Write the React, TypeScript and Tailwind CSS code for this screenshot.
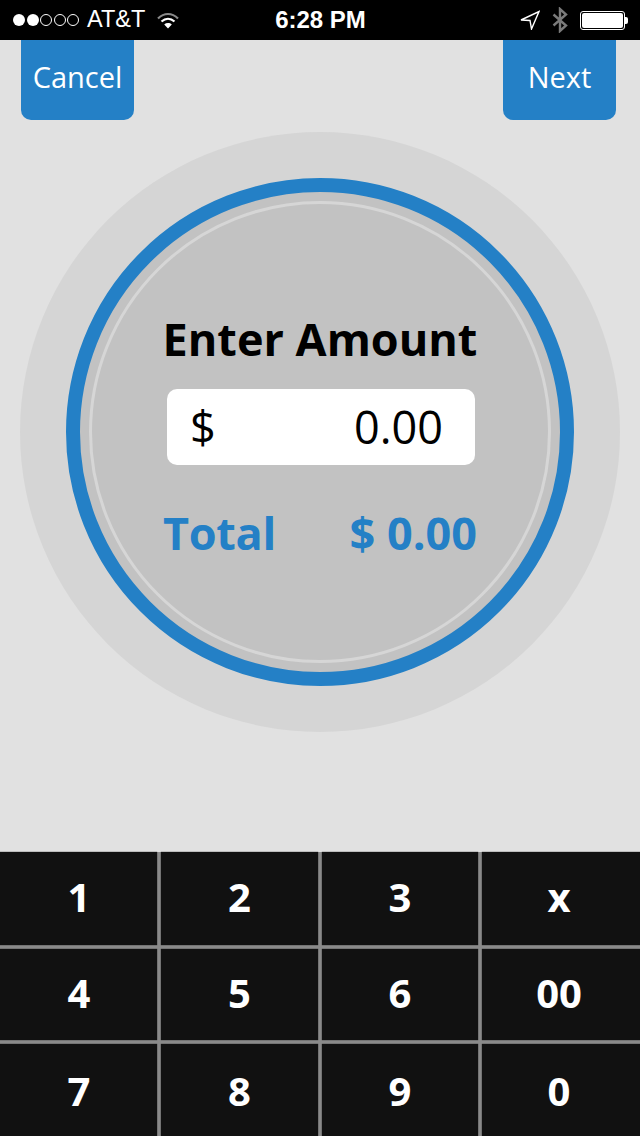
const BLUE = "text-[#2480c6]";

const keys = ["1", "2", "3", "x", "4", "5", "6", "00", "7", "8", "9", "0"];

function StatusBar() {
  return (
    <div className="flex h-10 items-center justify-between bg-black pl-[13px] pr-[12px] font-['Liberation_Sans',sans-serif] text-white">
      <div className="flex w-[190px] items-center">
        <div className="flex items-center gap-[1.5px]">
          <span className="h-[12px] w-[12px] rounded-full bg-white" />
          <span className="h-[12px] w-[12px] rounded-full bg-white" />
          <span className="h-[12px] w-[12px] rounded-full border border-white" />
          <span className="h-[12px] w-[12px] rounded-full border border-white" />
          <span className="h-[12px] w-[12px] rounded-full border border-white" />
        </div>
        <span className="ml-2 text-[23.5px] leading-none">AT&amp;T</span>
        <svg className="ml-[11px]" width="24" height="20" viewBox="0 0 24 20" fill="none">
          <path d="M2 8.5C8 2.5 16 2.5 22 8.5" stroke="#8a8a8a" strokeWidth="2.2" />
          <path d="M5.5 11.5C9.5 7.8 14.5 7.8 18.5 11.5" stroke="#fff" strokeWidth="2.2" />
          <path d="M12 18.5L8.2 14.4C10.4 12.6 13.6 12.6 15.8 14.4Z" fill="#fff" />
        </svg>
      </div>
      <span className="text-[24px] font-bold leading-none">6:28 PM</span>
      <div className="flex w-[190px] items-center justify-end">
        <svg width="20" height="20" viewBox="0 0 20 20" fill="none">
          <path d="M1 10L19 1.5L11.5 19L10 10.5Z" stroke="#fff" strokeWidth="1.4" strokeLinejoin="miter" />
        </svg>
        <svg className="ml-[12px]" width="16" height="26" viewBox="0 0 16 26" fill="none">
          <path d="M1.5 7.5L14 18.5L8 24V2L14 7.5L1.5 18.5" stroke="#7a7a7a" strokeWidth="2.4" />
        </svg>
        <div className="ml-[12px] flex items-center">
          <div className="h-[19px] w-[45px] rounded-[3px] border border-white p-[1px]">
            <div className="h-full w-full rounded-[2px] bg-white" />
          </div>
          <div className="h-[7px] w-[3px] rounded-r-[2px] bg-white" />
        </div>
      </div>
    </div>
  );
}

function TopButton({ label }: { label: string }) {
  return (
    <button className="flex h-20 w-[113px] items-center justify-center rounded-b-[10px] bg-[#2480c6] pb-[6px] text-[29px] text-white">
      {label}
    </button>
  );
}

function AmountDial() {
  return (
    <div className="mx-auto mt-3 flex h-[600px] w-[600px] items-center justify-center rounded-full bg-[#d5d5d5]">
      <div className="flex h-[508px] w-[508px] items-center justify-center rounded-full border-[14px] border-[#2480c6] bg-[#c2c2c2]">
        <div className="flex h-[462px] w-[462px] flex-col items-center rounded-full border-[3px] border-[#d6d6d6]">
          <h1 className="mt-[105px] text-[45px] leading-[60px] font-bold text-black">Enter Amount</h1>
          <div className="mt-[20px] ml-[2px] flex h-[76px] w-[308px] items-center justify-between rounded-[10px] bg-white pl-[23px] pr-8 text-[45px] text-black">
            <span>$</span>
            <span>0.00</span>
          </div>
          <div className={`mt-[38px] flex w-[314px] items-center justify-between text-[45px] leading-[60px] font-bold ${BLUE}`}>
            <span className="tracking-[-0.3px]">Total</span>
            <span>$ 0.00</span>
          </div>
        </div>
      </div>
    </div>
  );
}

function Keypad() {
  return (
    <div className="mt-auto grid h-[284px] grid-cols-[157px_157px_156px_158px] grid-rows-[93px_91px_92px] gap-x-[4px] gap-y-[4px] bg-[#8a8a8a]">
      {keys.map((k, i) => (
        <button
          key={k}
          className={`flex items-center justify-center bg-[#111111] text-[40px] font-bold text-white shadow-[0_0_1px_#111111] ${i > 7 ? "pt-[1px]" : "pb-[3px]"} ${i % 4 === 3 ? "pr-[4px]" : ""} ${i % 4 === 0 ? "pl-[1px]" : ""}`}
        >
          {k}
        </button>
      ))}
    </div>
  );
}

export default function App() {
  return (
    <div className="flex h-[1136px] w-[640px] flex-col overflow-hidden bg-[#e1e1e1] font-['Open_Sans',sans-serif]">
      <StatusBar />
      <div className="flex justify-between pl-[21px] pr-[24px]">
        <TopButton label="Cancel" />
        <TopButton label="Next" />
      </div>
      <AmountDial />
      <Keypad />
    </div>
  );
}
